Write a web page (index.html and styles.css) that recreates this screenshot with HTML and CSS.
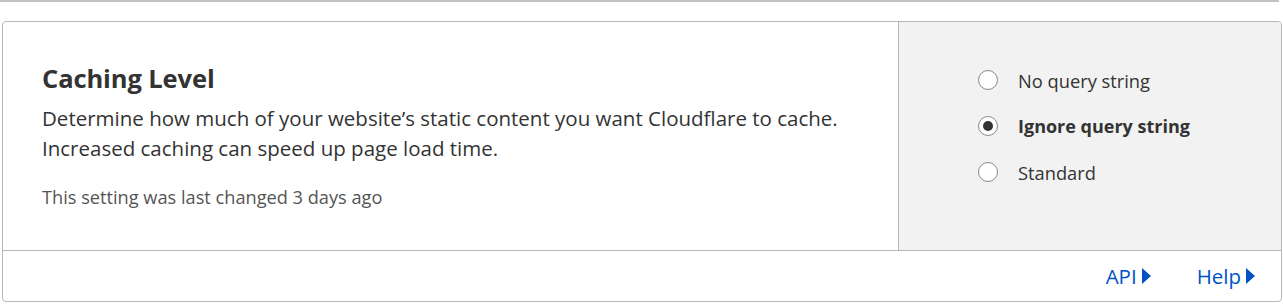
FILE: index.html
```html
<!DOCTYPE html>
<html>
<head>
<meta charset="utf-8">
<link rel="stylesheet" href="styles.css">
</head>
<body>
<div class="prev"></div>
<div class="card">
  <div class="main">
    <div class="info">
      <h3 class="title">Caching Level</h3>
      <p class="desc">Determine how much of your website’s static content you want Cloudflare to cache.<br>Increased caching can speed up page load time.</p>
      <p class="meta">This setting was last changed 3 days ago</p>
    </div>
    <div class="control">
      <label class="opt"><span class="radio"></span><span class="lbl">No query string</span></label>
      <label class="opt sel"><span class="radio"></span><span class="lbl">Ignore query string</span></label>
      <label class="opt"><span class="radio"></span><span class="lbl">Standard</span></label>
    </div>
  </div>
  <div class="foot">
    <a class="link" href="#">API<span class="tri"></span></a>
    <a class="link" href="#">Help<span class="tri"></span></a>
  </div>
</div>
</body>
</html>
```
FILE: styles.css
```css
html, body { margin: 0; padding: 0; background: #fff; }
body { font-family: "Open Sans", "Noto Sans", sans-serif; color: #333; }
.prev { width: 1279px; height: 0; border-bottom: 2px solid #c2c2c2; }
.card {
  margin: 19px 0 0 2px;
  width: 1278px;
  border: 1px solid #b6b6b6;
  border-radius: 4px;
  overflow: hidden;
}
.main { display: flex; height: 228px; border-bottom: 1px solid #b6b6b6; }
.info { width: 856px; padding: 40px 0 0 39px; border-right: 1px solid #b6b6b6; }
.title { margin: 0; font-size: 25.5px; font-weight: 700; line-height: 32px; color: #333; letter-spacing: -0.1px; }
.desc { margin: 9px 0 0; font-size: 20.5px; line-height: 30px; color: #333; }
.meta { margin: 22px 0 0; font-size: 18.2px; line-height: 24px; color: #555; }
.control { flex: 1; background: #f2f2f2; padding: 46px 0 0 79px; display: flex; flex-direction: column; gap: 22px; }
.opt { display: flex; align-items: center; height: 24px; font-size: 18.3px; color: #333; }
.radio { width: 18px; height: 18px; border: 1px solid #8a8a8a; border-radius: 50%; background: #fff; margin-right: 20px; display: flex; align-items: center; justify-content: center; }
.sel .radio::after { content: ""; width: 10px; height: 10px; border-radius: 50%; background: #333; }
.sel .lbl { font-weight: 700; font-size: 18px; }
.foot { height: 50px; display: flex; justify-content: flex-end; align-items: center; gap: 46px; padding-right: 26px; }
.link { color: #0051c3; text-decoration: none; font-size: 20.5px; display: flex; align-items: center; }
.tri { width: 0; height: 0; border-left: 9px solid #0051c3; border-top: 8px solid transparent; border-bottom: 8px solid transparent; margin-left: 5px; }
```
